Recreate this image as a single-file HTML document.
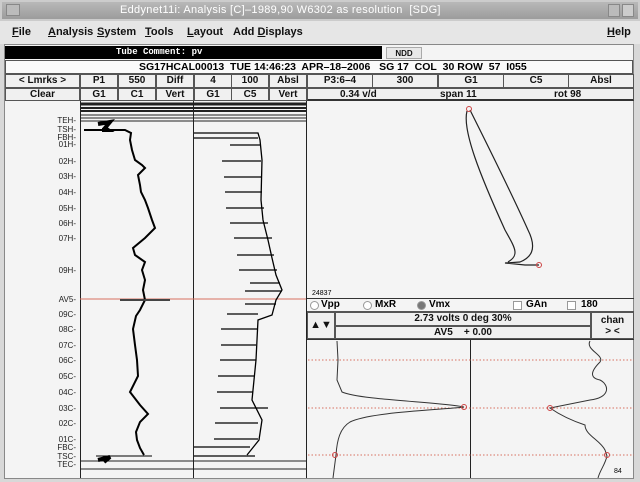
<!DOCTYPE html>
<html><head><style>
body{margin:0;width:640px;height:482px;overflow:hidden;background:#d8d8d8;font-family:"Liberation Sans",sans-serif;position:relative}
.a{position:absolute;box-sizing:border-box}
.c{position:absolute;box-sizing:border-box;border:1px solid #555;background:#f0f0f0;font-size:10px;font-weight:bold;text-align:center;color:#111;line-height:11px}
.m{position:absolute;top:26px;font-size:11px;font-weight:bold;color:#111}
</style></head><body>
<div class="a" style="left:0;top:0;width:640px;height:21px;background:linear-gradient(#b8b8b8,#9c9c9c);border:2px solid #ccc"></div>
<div class="a" style="left:6px;top:4px;width:14px;height:12px;background:#bbb;border:1px solid #888"></div>
<div class="a" style="left:120px;top:4px;width:400px;font-size:11px;color:#fff;letter-spacing:0.3px;white-space:nowrap">Eddynet11i: Analysis [C]–1989,90 W6302 as resolution&nbsp; [SDG]</div>
<div class="a" style="left:608px;top:4px;width:12px;height:13px;background:#bbb;border:1px solid #888"></div>
<div class="a" style="left:622px;top:4px;width:12px;height:13px;background:#ccc;border:1px solid #888"></div>
<div class="a" style="left:0;top:21px;width:640px;height:23px;background:#e6e6e6"></div>
<span class="m" style="left:12px"><u>F</u>ile</span><span class="m" style="left:48px"><u>A</u>nalysis</span><span class="m" style="left:97px"><u>S</u>ystem</span><span class="m" style="left:145px"><u>T</u>ools</span><span class="m" style="left:187px"><u>L</u>ayout</span><span class="m" style="left:233px">Add <u>D</u>isplays</span><span class="m" style="left:607px"><u>H</u>elp</span>
<div class="a" style="left:4px;top:44px;width:630px;height:435px;background:#f4f4f4;border:1px solid #888"></div>
<div class="a" style="left:5px;top:46px;width:377px;height:13px;background:#000;color:#fff;font-family:'Liberation Mono',monospace;font-size:9px;font-weight:bold;padding-left:111px;line-height:13px">Tube Comment: pv</div>
<div class="c" style="left:386px;top:47px;width:36px;height:12px;font-size:8px;background:#e8e8e8;border-color:#aaa">NDD</div>
<div class="a" style="left:5px;top:60px;width:628px;height:14px;border:1px solid #555;background:#fafafa;font-size:10.5px;font-weight:bold;padding-left:133px;line-height:12px;white-space:nowrap">SG17HCAL00013&nbsp; TUE 14:46:23&nbsp; APR–18–2006&nbsp;&nbsp; SG 17&nbsp; COL&nbsp; 30 ROW&nbsp; 57&nbsp; I055</div>
<div class="c" style="left:5px;top:74px;width:75px;height:14px">&lt; Lmrks &gt;</div>
<div class="c" style="left:5px;top:88px;width:75px;height:13px">Clear</div>
<div class="c" style="left:80px;top:74px;width:38px;height:14px">P1</div><div class="c" style="left:118px;top:74px;width:38px;height:14px">550</div><div class="c" style="left:156px;top:74px;width:38px;height:14px">Diff</div>
<div class="c" style="left:194px;top:74px;width:38px;height:14px">4</div><div class="c" style="left:231px;top:74px;width:38px;height:14px">100</div><div class="c" style="left:269px;top:74px;width:38px;height:14px">Absl</div>
<div class="c" style="left:80px;top:88px;width:38px;height:13px">G1</div><div class="c" style="left:118px;top:88px;width:38px;height:13px">C1</div><div class="c" style="left:156px;top:88px;width:38px;height:13px">Vert</div>
<div class="c" style="left:194px;top:88px;width:38px;height:13px">G1</div><div class="c" style="left:231px;top:88px;width:38px;height:13px">C5</div><div class="c" style="left:269px;top:88px;width:38px;height:13px">Vert</div>
<div class="c" style="left:307px;top:74px;width:66px;height:14px">P3:6–4</div><div class="c" style="left:372px;top:74px;width:66px;height:14px">300</div><div class="c" style="left:438px;top:74px;width:66px;height:14px">G1</div><div class="c" style="left:503px;top:74px;width:66px;height:14px">C5</div><div class="c" style="left:568px;top:74px;width:66px;height:14px">Absl</div>
<div class="c" style="left:307px;top:88px;width:327px;height:13px;border-bottom:2px solid #333"><span class="a" style="left:32px">0.34 v/d</span><span class="a" style="left:132px">span 11</span><span class="a" style="left:246px">rot 98</span></div>

<svg class="a" style="left:0;top:0" width="640" height="482" font-family="Liberation Sans" font-size="8">
<g stroke="#222" fill="none">
<line x1="80.5" y1="101" x2="80.5" y2="478"/><line x1="193.5" y1="101" x2="193.5" y2="478"/><line x1="306.5" y1="101" x2="306.5" y2="478"/>
<line x1="80" y1="104" x2="306" y2="104" stroke-width="3"/><line x1="80" y1="108" x2="306" y2="108" stroke-width="2"/><line x1="80" y1="111" x2="306" y2="111" stroke-width="2"/><line x1="80" y1="115" x2="306" y2="115"/><line x1="80" y1="118" x2="306" y2="118"/><line x1="80" y1="121" x2="306" y2="121"/>
<line x1="80" y1="461" x2="306" y2="461"/><line x1="80" y1="469" x2="306" y2="469"/>
</g>
<line x1="80" y1="299" x2="306" y2="299" stroke="#d87060"/>
<path d="M98 124 L110 122 L105 128 L108 130 L102 130" stroke="#000" stroke-width="4" fill="none"/>
<path d="M98 460 L110 457 L104 462" stroke="#000" stroke-width="4" fill="none"/>
<path d="M84 130 L125 130 L131 133 L130 140 L132 150 L135 160 L142 165 L145 168 L138 175 L140 185 L141 192 L145 200 L148 208 L152 220 L155 228 L145 238 L133 248 L135 255 L145 262 L142 270 L145 280 L143 290 L145 300 L140 310 L136 316 L133 329 L135 345 L137 360 L138 376 L130 392 L140 405 L148 414 L140 422 L136 432 L137 440 L140 448 L144 455" stroke="#000" stroke-width="2" fill="none"/>
<line x1="120" y1="300" x2="170" y2="300" stroke="#444" stroke-width="2"/><line x1="96" y1="456" x2="152" y2="456" stroke="#000"/>
<path d="M194 133 L258 133 L260 140 L262 160 L261 200 L263 220 L268 240 L272 258 L276 275 L282 290 L276 300 L272 315 L258 320 L256 360 L252 400 L262 420 L259 440 L247 455" stroke="#000" stroke-width="1.3" fill="none"/>
<g stroke="#000" stroke-width="1.3">
<line x1="194" y1="138" x2="258" y2="138"/><line x1="230" y1="145" x2="260" y2="145"/><line x1="222" y1="161" x2="261" y2="161"/><line x1="224" y1="177" x2="261" y2="177"/><line x1="225" y1="192" x2="262" y2="192"/><line x1="226" y1="208" x2="264" y2="208"/><line x1="230" y1="223" x2="268" y2="223"/><line x1="234" y1="238" x2="272" y2="238"/><line x1="237" y1="255" x2="274" y2="255"/><line x1="239" y1="270" x2="277" y2="270"/><line x1="250" y1="283" x2="280" y2="283"/><line x1="245" y1="291" x2="282" y2="291"/><line x1="245" y1="304" x2="276" y2="304"/><line x1="227" y1="314" x2="258" y2="314"/><line x1="221" y1="329" x2="257" y2="329"/><line x1="221" y1="345" x2="256" y2="345"/><line x1="220" y1="360" x2="256" y2="360"/><line x1="218" y1="376" x2="254" y2="376"/><line x1="217" y1="392" x2="253" y2="392"/><line x1="220" y1="408" x2="268" y2="408"/><line x1="215" y1="423" x2="258" y2="423"/><line x1="214" y1="439" x2="258" y2="439"/><line x1="194" y1="447" x2="250" y2="447"/><line x1="194" y1="456" x2="255" y2="456"/>
</g>
<g fill="#222" text-anchor="end">
<text x="76" y="123">TEH-</text><text x="76" y="132">TSH-</text><text x="76" y="140">FBH-</text><text x="76" y="147">01H-</text><text x="76" y="164">02H-</text><text x="76" y="179">03H-</text><text x="76" y="195">04H-</text><text x="76" y="211">05H-</text><text x="76" y="226">06H-</text><text x="76" y="241">07H-</text><text x="76" y="273">09H-</text><text x="76" y="302">AV5-</text><text x="76" y="317">09C-</text><text x="76" y="332">08C-</text><text x="76" y="348">07C-</text><text x="76" y="363">06C-</text><text x="76" y="379">05C-</text><text x="76" y="395">04C-</text><text x="76" y="411">03C-</text><text x="76" y="426">02C-</text><text x="76" y="442">01C-</text><text x="76" y="450">FBC-</text><text x="76" y="459">TSC-</text><text x="76" y="467">TEC-</text>
</g>
<line x1="307" y1="298.5" x2="634" y2="298.5" stroke="#333"/>
<path d="M467 111 C462 130 480 175 505 230 C515 248 520 255 508 262 M470 110 C485 140 510 190 528 230 C538 250 530 258 520 262 L505 263 L525 265 L539 265" stroke="#222" stroke-width="1.2" fill="none"/>
<circle cx="469" cy="109" r="2.5" stroke="#c44" fill="none"/><circle cx="539" cy="265" r="2.5" stroke="#c44" fill="none"/>
<text x="312" y="295" font-size="7">24837</text>
</svg>
<div class="a" style="left:307px;top:299px;width:327px;height:13px;border-bottom:1px solid #555;font-size:10px;font-weight:bold;line-height:12px">
<span class="a" style="left:3px;top:2px;width:9px;height:9px;border-radius:5px;border:1px solid #999;background:#fff"></span><span class="a" style="left:14px">Vpp</span>
<span class="a" style="left:56px;top:2px;width:9px;height:9px;border-radius:5px;border:1px solid #999;background:#fff"></span><span class="a" style="left:68px">MxR</span>
<span class="a" style="left:110px;top:2px;width:9px;height:9px;border-radius:5px;border:1px solid #999;background:#777"></span><span class="a" style="left:122px">Vmx</span>
<span class="a" style="left:206px;top:2px;width:9px;height:9px;border:1px solid #999;background:#fff"></span><span class="a" style="left:219px">GAn</span>
<span class="a" style="left:260px;top:2px;width:9px;height:9px;border:1px solid #999;background:#fff"></span><span class="a" style="left:274px">180</span></div>
<div class="c" style="left:307px;top:312px;width:28px;height:27px;font-size:11px;line-height:25px">▲▼</div>
<div class="c" style="left:335px;top:312px;width:256px;height:14px">2.73 volts 0 deg 30%</div>
<div class="c" style="left:335px;top:326px;width:256px;height:13px">AV5&nbsp;&nbsp;&nbsp; + 0.00</div>
<div class="c" style="left:591px;top:312px;width:43px;height:27px;padding-top:2px">chan<br>&gt; &lt;</div>
<svg class="a" style="left:0;top:0" width="640" height="482">
<line x1="470.5" y1="339" x2="470.5" y2="478" stroke="#222"/>
<g stroke="#d87060" stroke-dasharray="1.5 2"><line x1="308" y1="360" x2="634" y2="360"/><line x1="308" y1="408" x2="634" y2="408"/><line x1="308" y1="455" x2="634" y2="455"/></g>
<path d="M337 341 L338 360 L337 380 L342 392 C360 400 440 402 464 407 C440 410 370 412 350 422 C340 428 337 440 336 455 L333 478" stroke="#333" fill="none"/>
<path d="M590 341 C585 350 605 355 600 362 C590 372 590 378 600 380 C610 385 610 398 590 400 L550 408 C560 415 570 420 585 425 C585 435 600 440 605 450 L607 456 C605 465 600 470 598 478" stroke="#333" fill="none"/>
<g stroke="#c44" fill="none"><circle cx="464" cy="407" r="2.5"/><circle cx="335" cy="455" r="2.5"/><circle cx="550" cy="408" r="2.5"/><circle cx="607" cy="455" r="2.5"/></g>
<text x="614" y="473" font-size="7" font-family="Liberation Sans">84</text>
<line x1="307" y1="339.5" x2="634" y2="339.5" stroke="#333"/>
</svg>
</body></html>
